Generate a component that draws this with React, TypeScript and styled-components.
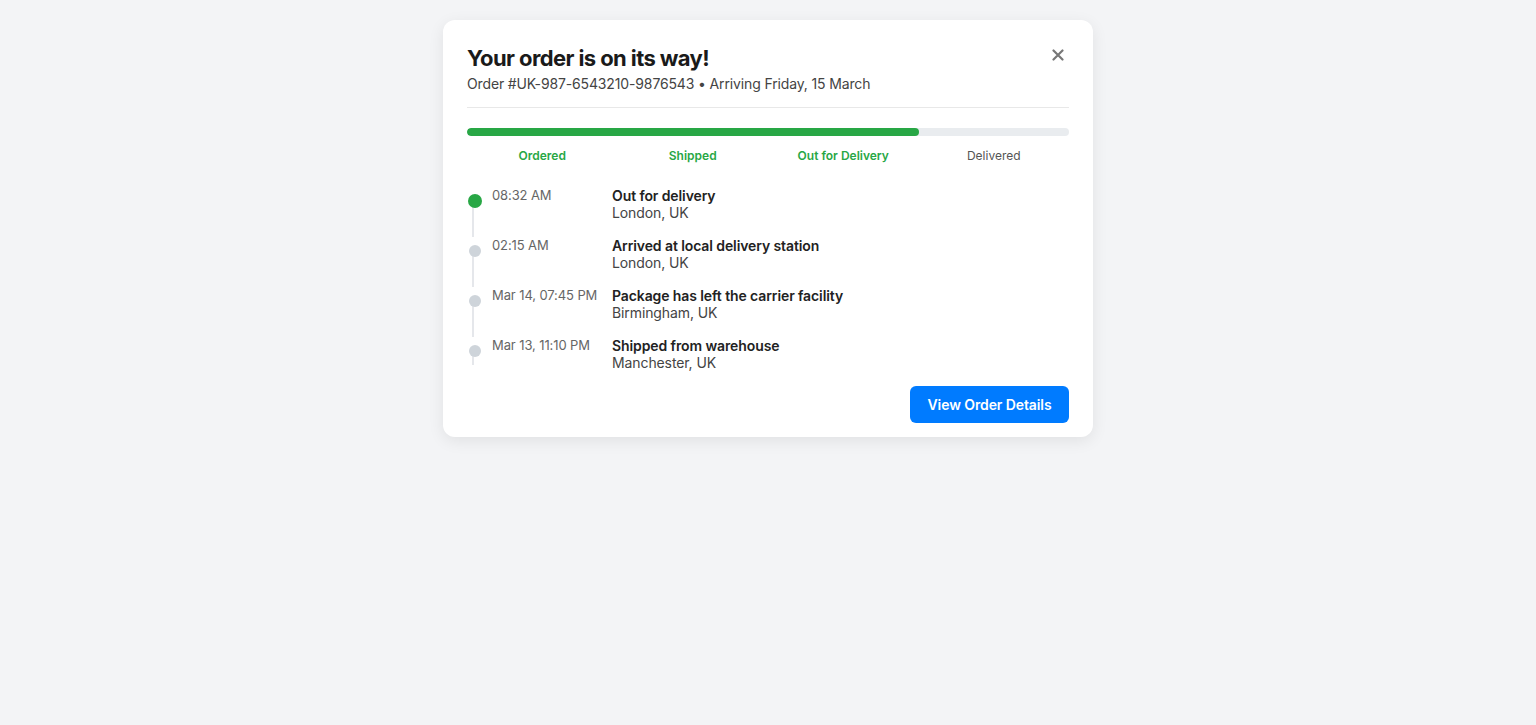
import React, { FC } from "react";
import styled, { createGlobalStyle } from "styled-components";

const GlobalStyle = createGlobalStyle`
  html, body {
    margin: 0;
    padding: 0;
    background: #f3f4f6;
    font-family: Inter, "Noto Sans", "Liberation Sans", sans-serif;
    color: #1a1a1a;
  }
`;

const Page = styled.div`
  min-height: 725px;
  display: flex;
  justify-content: center;
  align-items: flex-start;
  padding-top: 20px;
  box-sizing: border-box;
`;

const Card = styled.div`
  width: 650px;
  box-sizing: border-box;
  background: #ffffff;
  border-radius: 12px;
  box-shadow: 0 4px 16px rgba(0, 0, 0, 0.08);
  padding: 25px 24px 14px;
  display: flex;
  flex-direction: column;
`;

const Header = styled.div`
  display: flex;
  justify-content: space-between;
  align-items: flex-start;
  padding-bottom: 14px;
  border-bottom: 1px solid #e8e8e8;
`;

const Title = styled.h2`
  margin: 0;
  font-size: 22px;
  font-weight: 700;
  line-height: 27px;
  color: #1a1a1a;
  letter-spacing: -0.6px;
`;

const Subtitle = styled.p`
  margin: 3px 0 0;
  font-size: 14px;
  line-height: 18px;
  color: #444;
  letter-spacing: -0.14px;
`;

const CloseButton = styled.button`
  border: none;
  background: none;
  padding: 0;
  margin-top: 2px;
  margin-right: 3px;
  width: 16px;
  height: 16px;
  cursor: pointer;
  display: flex;
  align-items: center;
  justify-content: center;
`;

const Progress = styled.div`
  margin-top: 20px;
`;

const Track = styled.div`
  height: 8px;
  border-radius: 4px;
  background: #e9ecef;
  overflow: hidden;
`;

const Fill = styled.div`
  height: 100%;
  border-radius: 4px;
  background: #28a745;
`;

const Steps = styled.div`
  display: grid;
  grid-template-columns: repeat(4, 1fr);
  margin-top: 12px;
`;

const Step = styled.span<{ $done: boolean }>`
  text-align: center;
  font-size: 12px;
  line-height: 15px;
  font-weight: ${(p) => (p.$done ? 600 : 400)};
  color: ${(p) => (p.$done ? "#28a745" : "#555")};
`;

const Timeline = styled.ul`
  list-style: none;
  margin: 24px 0 0;
  padding: 0;
  display: flex;
  flex-direction: column;
  gap: 16px;
`;

const Item = styled.li`
  position: relative;
  display: grid;
  grid-template-columns: 120px 1fr;
  padding-left: 25px;

  &::before {
    content: "";
    position: absolute;
    left: 5px;
    top: 14px;
    bottom: -16px;
    width: 2px;
    background: #e5e7eb;
  }

  &:last-child::before {
    bottom: 6px;
  }
`;

const Dot = styled.span<{ $active: boolean }>`
  position: absolute;
  z-index: 1;
  left: ${(p) => (p.$active ? 1 : 2)}px;
  top: ${(p) => (p.$active ? 7 : 8)}px;
  width: ${(p) => (p.$active ? 14 : 12)}px;
  height: ${(p) => (p.$active ? 14 : 12)}px;
  border-radius: 50%;
  background: ${(p) => (p.$active ? "#28a745" : "#ced4da")};
`;

const Time = styled.span`
  font-size: 13px;
  line-height: 17px;
  color: #666;
  letter-spacing: -0.1px;
`;

const Event = styled.div`
  display: flex;
  flex-direction: column;
`;

const EventTitle = styled.span`
  font-size: 14px;
  line-height: 17px;
  font-weight: 600;
  color: #222;
  letter-spacing: -0.1px;
`;

const EventPlace = styled.span`
  font-size: 14px;
  line-height: 17px;
  color: #444;
  letter-spacing: -0.1px;
`;

const Footer = styled.div`
  display: flex;
  justify-content: flex-end;
  margin-top: 15px;
`;

const PrimaryButton = styled.button`
  border: none;
  background: #007bff;
  color: #fff;
  font-family: inherit;
  font-size: 14px;
  font-weight: 600;
  letter-spacing: -0.1px;
  height: 37px;
  padding: 0 17.5px;
  border-radius: 6px;
  cursor: pointer;
`;

const steps = [
  { label: "Ordered", done: true },
  { label: "Shipped", done: true },
  { label: "Out for Delivery", done: true },
  { label: "Delivered", done: false },
];

const events = [
  { time: "08:32 AM", title: "Out for delivery", place: "London, UK" },
  { time: "02:15 AM", title: "Arrived at local delivery station", place: "London, UK" },
  { time: "Mar 14, 07:45 PM", title: "Package has left the carrier facility", place: "Birmingham, UK" },
  { time: "Mar 13, 11:10 PM", title: "Shipped from warehouse", place: "Manchester, UK" },
];

const CloseIcon: FC = () => (
  <svg width="12" height="12" viewBox="0 0 12 12">
    <path d="M1.5 1.5 L10.5 10.5 M10.5 1.5 L1.5 10.5" stroke="#777" strokeWidth="2.2" strokeLinecap="round" />
  </svg>
);

const App: FC = () => {
  return (
    <>
      <GlobalStyle />
      <Page>
        <Card>
          <Header>
            <div>
              <Title>Your order is on its way!</Title>
              <Subtitle>Order #UK-987-6543210-9876543 • Arriving Friday, 15 March</Subtitle>
            </div>
            <CloseButton aria-label="Close">
              <CloseIcon />
            </CloseButton>
          </Header>

          <Progress>
            <Track>
              <Fill style={{ width: "75%" }} />
            </Track>
            <Steps>
              {steps.map((s) => (
                <Step key={s.label} $done={s.done}>
                  {s.label}
                </Step>
              ))}
            </Steps>
          </Progress>

          <Timeline>
            {events.map((e, i) => (
              <Item key={e.time}>
                <Dot $active={i === 0} />
                <Time>{e.time}</Time>
                <Event>
                  <EventTitle>{e.title}</EventTitle>
                  <EventPlace>{e.place}</EventPlace>
                </Event>
              </Item>
            ))}
          </Timeline>

          <Footer>
            <PrimaryButton>View Order Details</PrimaryButton>
          </Footer>
        </Card>
      </Page>
    </>
  );
};

export default App;
